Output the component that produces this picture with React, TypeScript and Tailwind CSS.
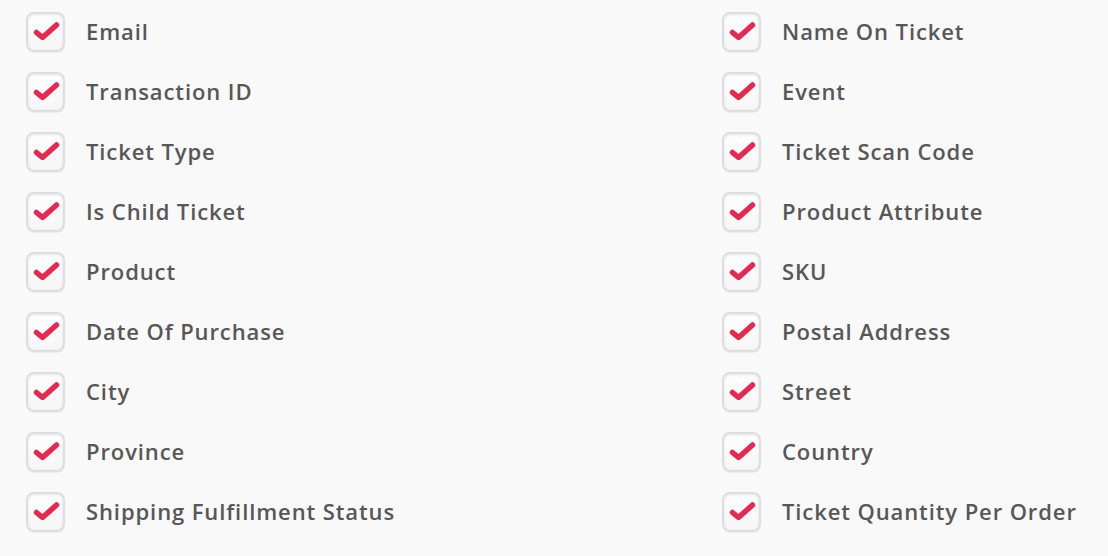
import React from 'react';

const LEFT = [
  "Email",
  "Transaction ID",
  "Ticket Type",
  "Is Child Ticket",
  "Product",
  "Date Of Purchase",
  "City",
  "Province",
  "Shipping Fulfillment Status",
];

const RIGHT = [
  "Name On Ticket",
  "Event",
  "Ticket Scan Code",
  "Product Attribute",
  "SKU",
  "Postal Address",
  "Street",
  "Country",
  "Ticket Quantity Per Order",
];

function CheckRow({ label }: { label: string }) {
  return (
    <div className="flex items-center h-[60px]">
      <div className="w-[39px] h-[40px] mt-[1px] rounded-[8px] border-2 border-[#dedede] bg-gradient-to-b from-white to-[#f6f6f6] shadow-[inset_0_1px_3px_rgba(0,0,0,0.1),0_1px_1px_rgba(0,0,0,0.05)] flex items-center justify-center">
        <svg width="30" height="24" viewBox="0 0 30 24" className="-ml-[1px]">
          <path d="M6.5 12.5 L12.5 17.5 L26.5 5" fill="none" stroke="#e52a52" strokeWidth="5.5" strokeLinecap="round" strokeLinejoin="round" />
        </svg>
      </div>
      <span className="ml-[21px] text-[22px] font-semibold text-[#575757] tracking-[0.9px] leading-[30px] -mt-[1px]">{label}</span>
    </div>
  );
}

export default function App() {
  return (
    <div className="w-[1108px] h-[556px] bg-[#f9f9f9] font-['Open_Sans',sans-serif] pt-[1px]">
      <div className="grid grid-cols-[696px_1fr] pl-[26px]">
        <div className="flex flex-col">
          {LEFT.map((l) => <CheckRow key={l} label={l} />)}
        </div>
        <div className="flex flex-col">
          {RIGHT.map((l) => <CheckRow key={l} label={l} />)}
        </div>
      </div>
    </div>
  );
}
